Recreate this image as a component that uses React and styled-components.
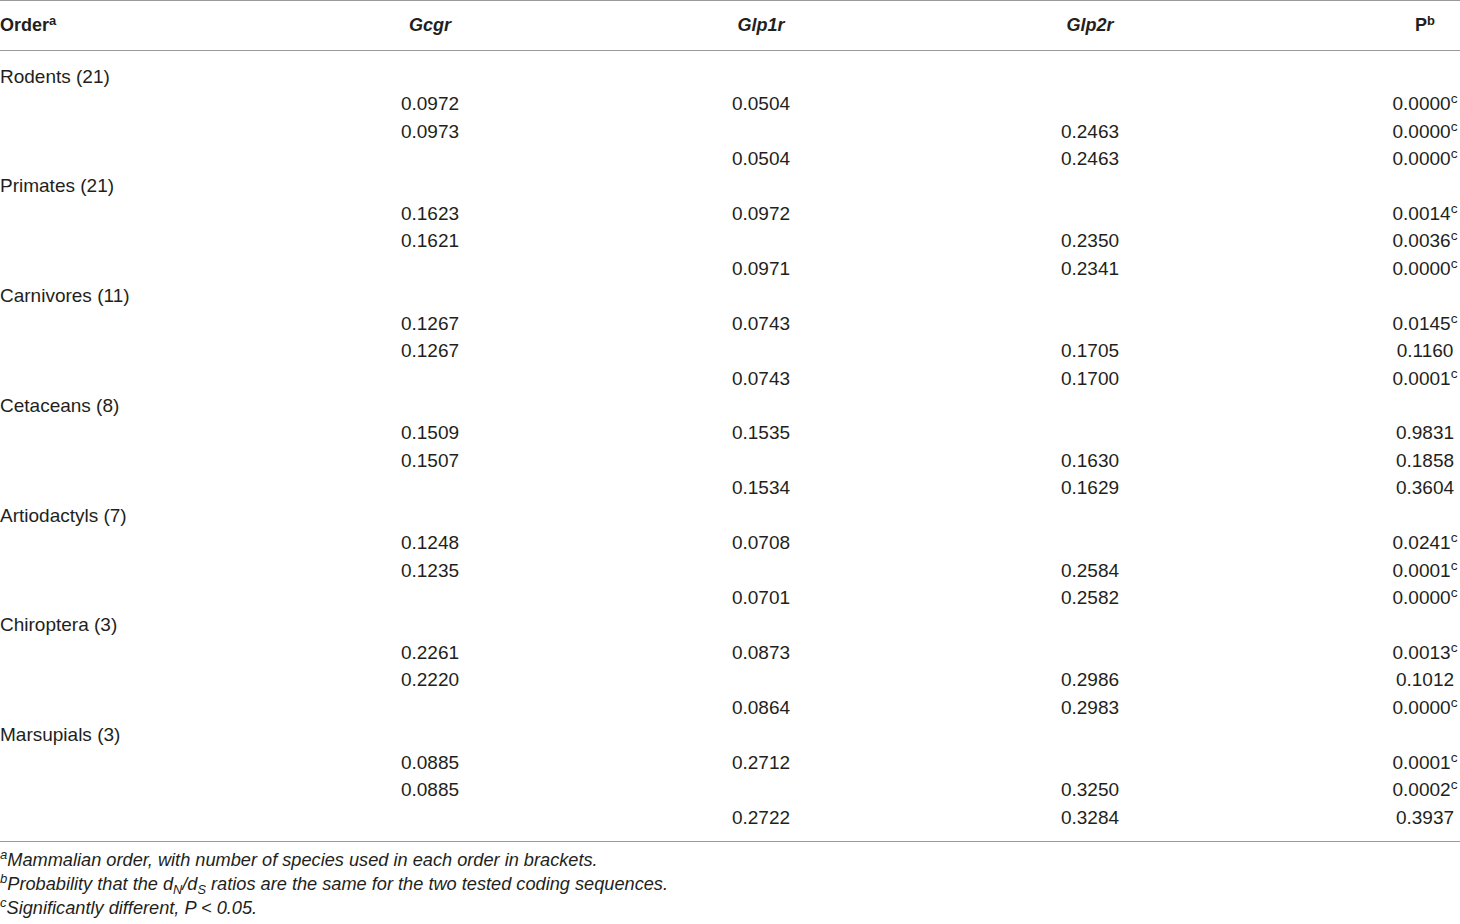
import React from 'react';
import styled, { createGlobalStyle } from 'styled-components';

const GlobalStyle = createGlobalStyle`
  html, body {
    margin: 0;
    padding: 0;
    background: #ffffff;
  }
  body {
    font-family: "Liberation Sans", Arial, sans-serif;
    color: #231f20;
  }
`;

const Page = styled.div`
  width: 1460px;
`;

const Grid = styled.div`
  display: grid;
  grid-template-columns: 300px 260px 402px 256px 1fr;
`;

const Head = styled(Grid)`
  border-top: 1px solid #9a9a9a;
  border-bottom: 1px solid #9a9a9a;
  height: 49px;
  align-items: center;
  font-size: 18px;
  font-weight: 700;
`;

const Body = styled.div`
  padding: 12px 0 10px;
  border-bottom: 1px solid #9a9a9a;
`;

const Row = styled(Grid)`
  height: 27.45px;
  align-items: center;
  font-size: 19px;
`;

const Cell = styled.div`
  text-align: ${p => (p.$left ? 'left' : 'center')};
  font-style: ${p => (p.$italic ? 'italic' : 'normal')};
  white-space: nowrap;
`;

const PCell = styled(Cell)`
  justify-self: end;
  width: 70px;
  text-align: center;
`;

const Sup = styled.sup`
  font-size: 0.72em;
  line-height: 0;
  vertical-align: 0.5em;
  font-weight: inherit;
`;

const Notes = styled.div`
  padding-top: 6px;
  font-size: 18.2px;
  font-style: italic;
  line-height: 24px;
`;

const Sub = styled.sub`
  font-size: 0.7em;
  line-height: 0;
  vertical-align: -0.3em;
`;

const groups = [
  ['Rodents (21)', [
    ['0.0972', '0.0504', '', '0.0000', true],
    ['0.0973', '', '0.2463', '0.0000', true],
    ['', '0.0504', '0.2463', '0.0000', true],
  ]],
  ['Primates (21)', [
    ['0.1623', '0.0972', '', '0.0014', true],
    ['0.1621', '', '0.2350', '0.0036', true],
    ['', '0.0971', '0.2341', '0.0000', true],
  ]],
  ['Carnivores (11)', [
    ['0.1267', '0.0743', '', '0.0145', true],
    ['0.1267', '', '0.1705', '0.1160', false],
    ['', '0.0743', '0.1700', '0.0001', true],
  ]],
  ['Cetaceans (8)', [
    ['0.1509', '0.1535', '', '0.9831', false],
    ['0.1507', '', '0.1630', '0.1858', false],
    ['', '0.1534', '0.1629', '0.3604', false],
  ]],
  ['Artiodactyls (7)', [
    ['0.1248', '0.0708', '', '0.0241', true],
    ['0.1235', '', '0.2584', '0.0001', true],
    ['', '0.0701', '0.2582', '0.0000', true],
  ]],
  ['Chiroptera (3)', [
    ['0.2261', '0.0873', '', '0.0013', true],
    ['0.2220', '', '0.2986', '0.1012', false],
    ['', '0.0864', '0.2983', '0.0000', true],
  ]],
  ['Marsupials (3)', [
    ['0.0885', '0.2712', '', '0.0001', true],
    ['0.0885', '', '0.3250', '0.0002', true],
    ['', '0.2722', '0.3284', '0.3937', false],
  ]],
];

export default function App() {
  return (
    <Page>
      <GlobalStyle />
      <Head>
        <Cell $left>Order<Sup>a</Sup></Cell>
        <Cell $italic>Gcgr</Cell>
        <Cell $italic>Glp1r</Cell>
        <Cell $italic>Glp2r</Cell>
        <PCell>P<Sup>b</Sup></PCell>
      </Head>
      <Body>
        {groups.map(([name, rows]) => (
          <React.Fragment key={name}>
            <Row>
              <Cell $left>{name}</Cell>
            </Row>
            {rows.map((r, i) => (
              <Row key={i}>
                <Cell />
                <Cell>{r[0]}</Cell>
                <Cell>{r[1]}</Cell>
                <Cell>{r[2]}</Cell>
                <PCell>{r[3]}{r[4] && <Sup>c</Sup>}</PCell>
              </Row>
            ))}
          </React.Fragment>
        ))}
      </Body>
      <Notes>
        <div><Sup>a</Sup>Mammalian order, with number of species used in each order in brackets.</div>
        <div><Sup>b</Sup>Probability that the d<Sub>N</Sub>/d<Sub>S</Sub> ratios are the same for the two tested coding sequences.</div>
        <div><Sup>c</Sup>Significantly different, P &lt; 0.05.</div>
      </Notes>
    </Page>
  );
}
